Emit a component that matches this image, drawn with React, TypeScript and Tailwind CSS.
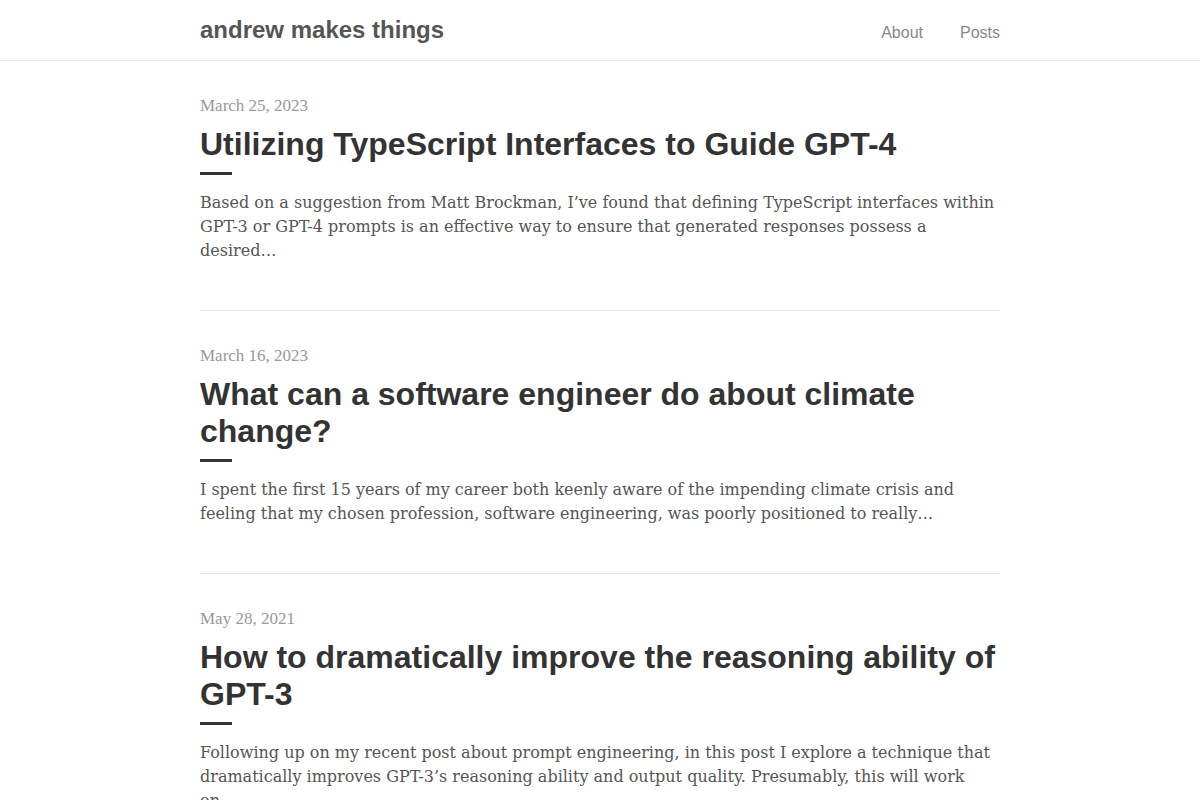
import React from "react";

const posts = [
  {
    date: "March 25, 2023",
    title: "Utilizing TypeScript Interfaces to Guide GPT-4",
    excerpt:
      "Based on a suggestion from Matt Brockman, I\u2019ve found that defining TypeScript interfaces within GPT-3 or GPT-4 prompts is an effective way to ensure that generated responses possess a desired\u2026",
  },
  {
    date: "March 16, 2023",
    title: "What can a software engineer do about climate change?",
    excerpt:
      "I spent the first 15 years of my career both keenly aware of the impending climate crisis and feeling that my chosen profession, software engineering, was poorly positioned to really\u2026",
  },
  {
    date: "May 28, 2021",
    title: "How to dramatically improve the reasoning ability of GPT-3",
    excerpt:
      "Following up on my recent post about prompt engineering, in this post I explore a technique that dramatically improves GPT-3\u2019s reasoning ability and output quality. Presumably, this will work on\u2026",
  },
];

function Header() {
  return (
    <header className="border-b border-[#ececec] bg-white">
      <div className="max-w-[800px] mx-auto h-[60px] flex items-center justify-between">
        <a className="text-[24px] leading-[30px] font-bold text-[#555] font-['Liberation_Sans',Arial,sans-serif] -mt-[1px]">
          andrew makes things
        </a>
        <nav className="flex gap-[37px] text-[16px] text-[#888] font-['Liberation_Sans',Arial,sans-serif] mt-[6px]">
          <a>About</a>
          <a>Posts</a>
        </nav>
      </div>
    </header>
  );
}

function PostItem({ post }: { post: (typeof posts)[number] }) {
  return (
    <article className="pt-[35px] pb-[47px] border-b border-[#e6e6e6]">
      <div className="text-[17px] leading-[20px] text-[#999] font-['Liberation_Serif','Times_New_Roman',serif]">
        {post.date}
      </div>
      <h2 className="mt-[10px] text-[32px] leading-[37px] font-bold text-[#333] font-['Liberation_Sans',Arial,sans-serif]">
        {post.title}
      </h2>
      <div className="mt-[9px] w-[32px] h-[3px] bg-[#333]" />
      <p className="mt-[16px] text-[16px] leading-[24px] text-[#555] font-['DejaVu_Serif',Georgia,serif]">
        {post.excerpt}
      </p>
    </article>
  );
}

export default function App() {
  return (
    <div className="min-h-screen bg-white">
      <Header />
      <main className="max-w-[800px] mx-auto">
        {posts.map((p) => (
          <PostItem key={p.date} post={p} />
        ))}
      </main>
    </div>
  );
}
